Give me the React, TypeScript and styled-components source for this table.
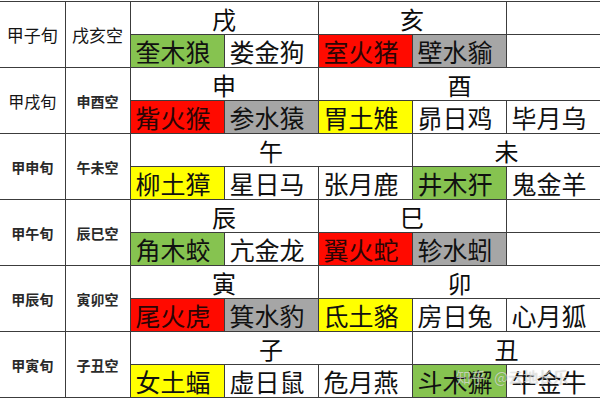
import React from 'react';
import styled, { createGlobalStyle } from 'styled-components';

type Tone = 'green' | 'red' | 'gray' | 'yellow' | 'none';

type Branch = { name: string; span: number };
type Star = { name: string; tone?: Tone };

type Xun = {
  xun: string;
  kong: string;
  xunSize: number;
  kongSize: number;
  xunBold?: boolean;
  kongBold?: boolean;
  branches: Branch[];
  stars: Star[];
};

const colWidths = [65, 65, 94, 94, 94, 94, 95];

const rows: Xun[] = [
  {
    xun: '甲子旬', kong: '戌亥空', xunSize: 17, kongSize: 17,
    branches: [{ name: '戌', span: 2 }, { name: '亥', span: 2 }, { name: '', span: 1 }],
    stars: [
      { name: '奎木狼', tone: 'green' }, { name: '娄金狗' },
      { name: '室火猪', tone: 'red' }, { name: '壁水貐', tone: 'gray' }, { name: '' },
    ],
  },
  {
    xun: '甲戌旬', kong: '申酉空', xunSize: 16, kongSize: 14, kongBold: true,
    branches: [{ name: '申', span: 2 }, { name: '酉', span: 3 }],
    stars: [
      { name: '觜火猴', tone: 'red' }, { name: '参水猿', tone: 'gray' },
      { name: '胃土雉', tone: 'yellow' }, { name: '昴日鸡' }, { name: '毕月乌' },
    ],
  },
  {
    xun: '甲申旬', kong: '午未空', xunSize: 14, kongSize: 14, xunBold: true, kongBold: true,
    branches: [{ name: '午', span: 3 }, { name: '未', span: 2 }],
    stars: [
      { name: '柳土獐', tone: 'yellow' }, { name: '星日马' }, { name: '张月鹿' },
      { name: '井木犴', tone: 'green' }, { name: '鬼金羊' },
    ],
  },
  {
    xun: '甲午旬', kong: '辰巳空', xunSize: 14, kongSize: 14, xunBold: true, kongBold: true,
    branches: [{ name: '辰', span: 2 }, { name: '巳', span: 2 }, { name: '', span: 1 }],
    stars: [
      { name: '角木蛟', tone: 'green' }, { name: '亢金龙' },
      { name: '翼火蛇', tone: 'red' }, { name: '轸水蚓', tone: 'gray' }, { name: '' },
    ],
  },
  {
    xun: '甲辰旬', kong: '寅卯空', xunSize: 14, kongSize: 14, xunBold: true, kongBold: true,
    branches: [{ name: '寅', span: 2 }, { name: '卯', span: 3 }],
    stars: [
      { name: '尾火虎', tone: 'red' }, { name: '箕水豹', tone: 'gray' },
      { name: '氐土貉', tone: 'yellow' }, { name: '房日兔' }, { name: '心月狐' },
    ],
  },
  {
    xun: '甲寅旬', kong: '子丑空', xunSize: 14, kongSize: 14, xunBold: true, kongBold: true,
    branches: [{ name: '子', span: 3 }, { name: '丑', span: 2 }],
    stars: [
      { name: '女土蝠', tone: 'yellow' }, { name: '虚日鼠' }, { name: '危月燕' },
      { name: '斗木獬', tone: 'green' }, { name: '牛金牛' },
    ],
  },
];

const toneColors: Record<Tone, string> = {
  green: '#86c350',
  red: '#ff0a00',
  gray: '#a6a6a6',
  yellow: '#ffff00',
  none: '#ffffff',
};

const GlobalStyle = createGlobalStyle`
  html, body {
    margin: 0;
    padding: 0;
    background: #ffffff;
    overflow: hidden;
  }
`;

const Page = styled.div`
  position: relative;
  width: 600px;
  height: 400px;
  overflow: hidden;
  background: #fff;
  padding-top: 1px;
  box-sizing: border-box;
`;

const Sheet = styled.table`
  border-collapse: collapse;
  table-layout: fixed;
  width: 601px;
  font-family: "Noto Sans CJK SC", "Noto Sans", sans-serif;
  color: #141414;
`;

const Column = styled.col<{ $w: number }>`
  width: ${({ $w }) => $w}px;
`;

const SheetRow = styled.tr`
  height: 33px;
`;

const Cell = styled.td`
  border: 1px solid #3c3c3c;
  padding: 0;
  line-height: 1;
  white-space: nowrap;
`;

const XunCell = styled(Cell)<{ $size: number; $bold?: boolean }>`
  border-left: none;
  text-align: center;
  font-size: ${({ $size }) => $size}px;
  font-weight: ${({ $bold }) => ($bold ? 700 : 400)};
  color: ${({ $bold }) => ($bold ? '#2a2a2a' : '#141414')};
`;

const KongCell = styled(Cell)<{ $size: number; $bold?: boolean }>`
  text-align: center;
  font-size: ${({ $size }) => $size}px;
  font-weight: ${({ $bold }) => ($bold ? 700 : 400)};
  color: ${({ $bold }) => ($bold ? '#2a2a2a' : '#141414')};
`;

const BranchCell = styled(Cell)`
  text-align: center;
  vertical-align: middle;
  padding-top: 2px;
  font-size: 24px;
  font-weight: 400;
  color: #0c0c0c;
`;

const StarCell = styled(Cell)<{ $tone: Tone }>`
  text-align: left;
  padding-left: 5px;
  font-size: 25px;
  background: ${({ $tone }) => toneColors[$tone]};
  color: ${({ $tone }) => ($tone === 'red' ? '#2b0505' : '#111')};
`;

const Watermark = styled.div`
  position: absolute;
  left: 456px;
  top: 366px;
  display: flex;
  align-items: center;
  gap: 8px;
  font-family: "Noto Sans CJK SC", "Noto Sans", sans-serif;
  font-size: 15px;
  color: rgba(255, 255, 255, 0.6);
  text-shadow: 0 0 1px rgba(60, 60, 60, 0.4);
  pointer-events: none;
`;

const App: React.FC = () => {
  return (
    <Page>
      <GlobalStyle />
      <Sheet>
        <colgroup>
          {colWidths.map((w, i) => (
            <Column key={i} $w={w} />
          ))}
        </colgroup>
        <tbody>
          {rows.map((row) => (
            <React.Fragment key={row.xun}>
              <SheetRow>
                <XunCell rowSpan={2} $size={row.xunSize} $bold={row.xunBold}>{row.xun}</XunCell>
                <KongCell rowSpan={2} $size={row.kongSize} $bold={row.kongBold}>{row.kong}</KongCell>
                {row.branches.map((b, i) => (
                  <BranchCell key={i} colSpan={b.span}>{b.name}</BranchCell>
                ))}
              </SheetRow>
              <SheetRow>
                {row.stars.map((s, i) => (
                  <StarCell key={i} $tone={s.tone ?? 'none'}>{s.name}</StarCell>
                ))}
              </SheetRow>
            </React.Fragment>
          ))}
        </tbody>
      </Sheet>
      <Watermark>
        <span>知乎</span>
        <span>@云地长乐</span>
      </Watermark>
    </Page>
  );
};

export default App;
